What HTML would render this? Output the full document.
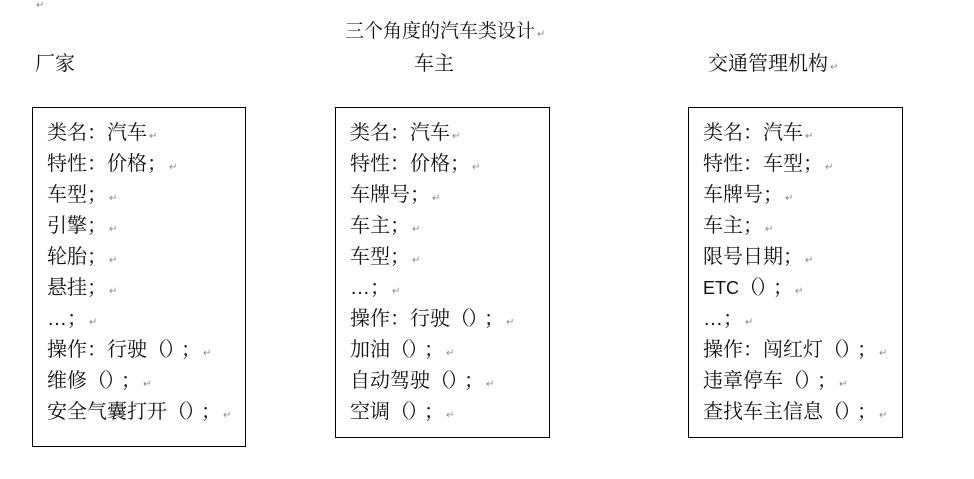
<!DOCTYPE html>
<html><head><meta charset="utf-8"><style>
body{margin:0;width:974px;height:479px;background:#fff;position:relative;overflow:hidden;font-family:"Liberation Sans","Noto Serif CJK SC","Noto Sans CJK SC",sans-serif;color:#111;font-size:20px}
.t{position:absolute;white-space:nowrap;line-height:22px}
.r{font-size:10px;color:#888;margin-left:2px}
.box{position:absolute;border:1px solid #000;}
.box div{position:absolute;left:14px;white-space:nowrap;line-height:22px}
i{font-style:normal;display:inline-block;width:20px;text-align:left}
b{font-weight:normal;display:inline-block;width:18px;text-align:center}
u{text-decoration:none;display:inline-block;width:16px;text-align:center}
</style></head><body>
<div class="t" style="left:34px;top:-9px"><span class="r">↵</span></div>
<div class="t" style="left:345px;top:21px;font-size:19px">三个角度的汽车类设计<span class="r">↵</span></div>
<div class="t" style="left:35px;top:53px">厂家</div>
<div class="t" style="left:414px;top:53px">车主</div>
<div class="t" style="left:708px;top:53px">交通管理机构<span class="r">↵</span></div>

<div class="box" style="left:32px;top:107px;width:212px;height:338px">
<div style="top:14px">类名<i>：</i>汽车<span class="r">↵</span></div>
<div style="top:45px">特性<i>：</i>价格<i>；</i><span class="r">↵</span></div>
<div style="top:76px">车型<i>；</i><span class="r">↵</span></div>
<div style="top:107px">引擎<i>；</i><span class="r">↵</span></div>
<div style="top:138px">轮胎<i>；</i><span class="r">↵</span></div>
<div style="top:169px">悬挂<i>；</i><span class="r">↵</span></div>
<div style="top:200px">…<i>；</i><span class="r">↵</span></div>
<div style="top:231px">操作<i>：</i>行驶<b>（</b><u>）</u><i>；</i><span class="r">↵</span></div>
<div style="top:262px">维修<b>（</b><u>）</u><i>；</i><span class="r">↵</span></div>
<div style="top:293px">安全气囊打开<b>（</b><u>）</u><i>；</i><span class="r">↵</span></div>
</div>

<div class="box" style="left:335px;top:107px;width:213px;height:329px">
<div style="top:14px">类名<i>：</i>汽车<span class="r">↵</span></div>
<div style="top:45px">特性<i>：</i>价格<i>；</i><span class="r">↵</span></div>
<div style="top:76px">车牌号<i>；</i><span class="r">↵</span></div>
<div style="top:107px">车主<i>；</i><span class="r">↵</span></div>
<div style="top:138px">车型<i>；</i><span class="r">↵</span></div>
<div style="top:169px">…<i>；</i><span class="r">↵</span></div>
<div style="top:200px">操作<i>：</i>行驶<b>（</b><u>）</u><i>；</i><span class="r">↵</span></div>
<div style="top:231px">加油<b>（</b><u>）</u><i>；</i><span class="r">↵</span></div>
<div style="top:262px">自动驾驶<b>（</b><u>）</u><i>；</i><span class="r">↵</span></div>
<div style="top:293px">空调<b>（</b><u>）</u><i>；</i><span class="r">↵</span></div>
</div>

<div class="box" style="left:688px;top:107px;width:213px;height:329px">
<div style="top:14px">类名<i>：</i>汽车<span class="r">↵</span></div>
<div style="top:45px">特性<i>：</i>车型<i>；</i><span class="r">↵</span></div>
<div style="top:76px">车牌号<i>；</i><span class="r">↵</span></div>
<div style="top:107px">车主<i>；</i><span class="r">↵</span></div>
<div style="top:138px">限号日期<i>；</i><span class="r">↵</span></div>
<div style="top:169px"><span style="font-size:18px">ETC</span><b>（</b><u>）</u><i>；</i><span class="r">↵</span></div>
<div style="top:200px">…<i>；</i><span class="r">↵</span></div>
<div style="top:231px">操作<i>：</i>闯红灯<b>（</b><u>）</u><i>；</i><span class="r">↵</span></div>
<div style="top:262px">违章停车<b>（</b><u>）</u><i>；</i><span class="r">↵</span></div>
<div style="top:293px">查找车主信息<b>（</b><u>）</u><i>；</i><span class="r">↵</span></div>
</div>
</body></html>
